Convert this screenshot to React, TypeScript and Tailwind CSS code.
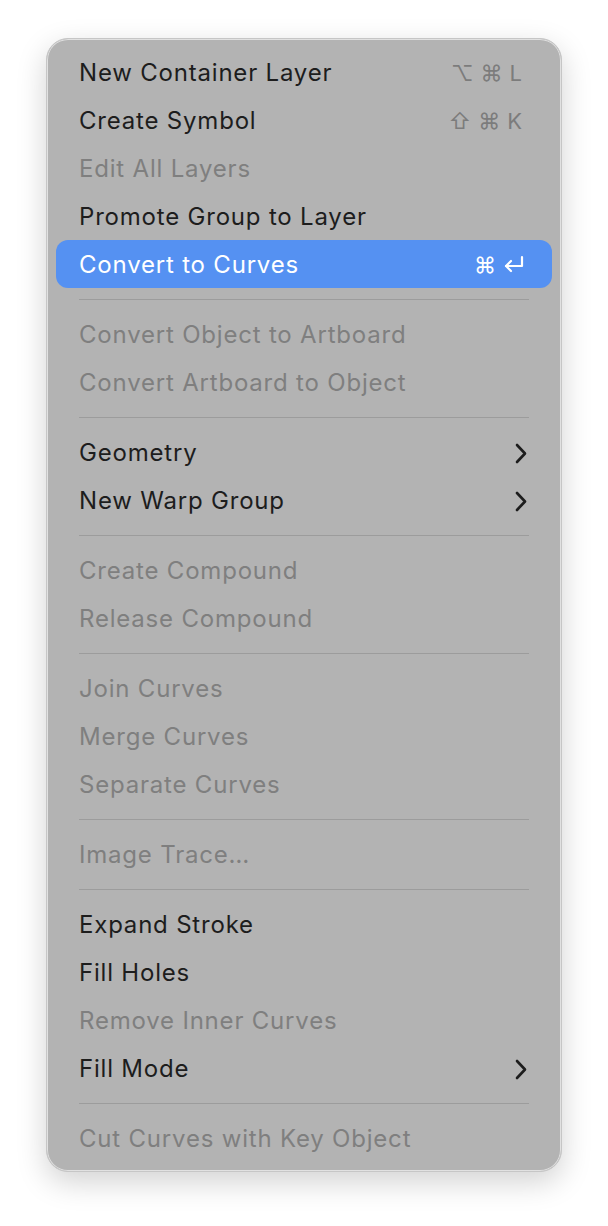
type Item =
  | { sep: true }
  | { sep?: false; label: string; disabled?: boolean; active?: boolean; shortcut?: React.ReactNode; submenu?: boolean };

function ReturnIcon() {
  return (
    <svg width="22" height="20" viewBox="0 0 22 20" fill="none" stroke="currentColor" strokeWidth="2.2" strokeLinecap="round" strokeLinejoin="round">
      <path d="M19 2v9H3" />
      <path d="M8 6l-5 5 5 5" />
    </svg>
  );
}

function Chevron() {
  return (
    <svg width="12" height="21" viewBox="0 0 12 21" fill="none" stroke="#1d1d1d" strokeWidth="2.6" strokeLinecap="round" strokeLinejoin="round">
      <path d="M2 2l8 8.5-8 8.5" />
    </svg>
  );
}

const items: Item[] = [
  { label: 'New Container Layer', shortcut: <span className="flex items-center gap-[7px]"><span>⌥</span><span>⌘</span><span>L</span></span> },
  { label: 'Create Symbol', shortcut: <span className="flex items-center gap-[7px]"><span>⇧</span><span>⌘</span><span>K</span></span> },
  { label: 'Edit All Layers', disabled: true },
  { label: 'Promote Group to Layer' },
  { label: 'Convert to Curves', active: true, shortcut: <span className="flex items-center gap-[7px]"><span>⌘</span><ReturnIcon /></span> },
  { sep: true },
  { label: 'Convert Object to Artboard', disabled: true },
  { label: 'Convert Artboard to Object', disabled: true },
  { sep: true },
  { label: 'Geometry', submenu: true },
  { label: 'New Warp Group', submenu: true },
  { sep: true },
  { label: 'Create Compound', disabled: true },
  { label: 'Release Compound', disabled: true },
  { sep: true },
  { label: 'Join Curves', disabled: true },
  { label: 'Merge Curves', disabled: true },
  { label: 'Separate Curves', disabled: true },
  { sep: true },
  { label: 'Image Trace…', disabled: true },
  { sep: true },
  { label: 'Expand Stroke' },
  { label: 'Fill Holes' },
  { label: 'Remove Inner Curves', disabled: true },
  { label: 'Fill Mode', submenu: true },
  { sep: true },
  { label: 'Cut Curves with Key Object', disabled: true },
];

export default function App() {
  return (
    <div className="min-h-[1226px] bg-white pl-[46px] pt-[38px] font-['Inter','Liberation_Sans',sans-serif]">
      <div className="w-[516px] rounded-[22px] border border-[#c6c6c6] bg-[#b3b3b3] px-[9px] pt-[9px] pb-[9px] shadow-[0_0_0_1px_rgba(255,255,255,0.6)_inset,0_10px_30px_rgba(0,0,0,0.18)]">
        {items.map((it, i) =>
          it.sep ? (
            <div key={i} className="flex h-[22px] items-center px-[23px]">
              <div className="h-px w-full bg-[#9c9c9c]" />
            </div>
          ) : (
            <div
              key={i}
              className={
                'flex h-12 items-center justify-between rounded-[12px] pt-[2px] pl-[23px] text-[24px] tracking-[0.8px] ' +
                (it.active ? 'bg-[#5591f2] pr-[27px] text-white' : it.disabled ? 'pr-[30px] text-[#7f7f7f]' : 'pr-[30px] text-[#1d1d1d]')
              }
            >
              <span>{it.label}</span>
              {it.shortcut && (
                <span className={'font-[\'DejaVu_Sans\',sans-serif] text-[22px] tracking-normal ' + (it.active ? 'text-white' : 'text-[#7c7c7c]')}>
                  {it.shortcut}
                </span>
              )}
              {it.submenu && <span className="mr-[-5px] flex"><Chevron /></span>}
            </div>
          )
        )}
      </div>
    </div>
  );
}
